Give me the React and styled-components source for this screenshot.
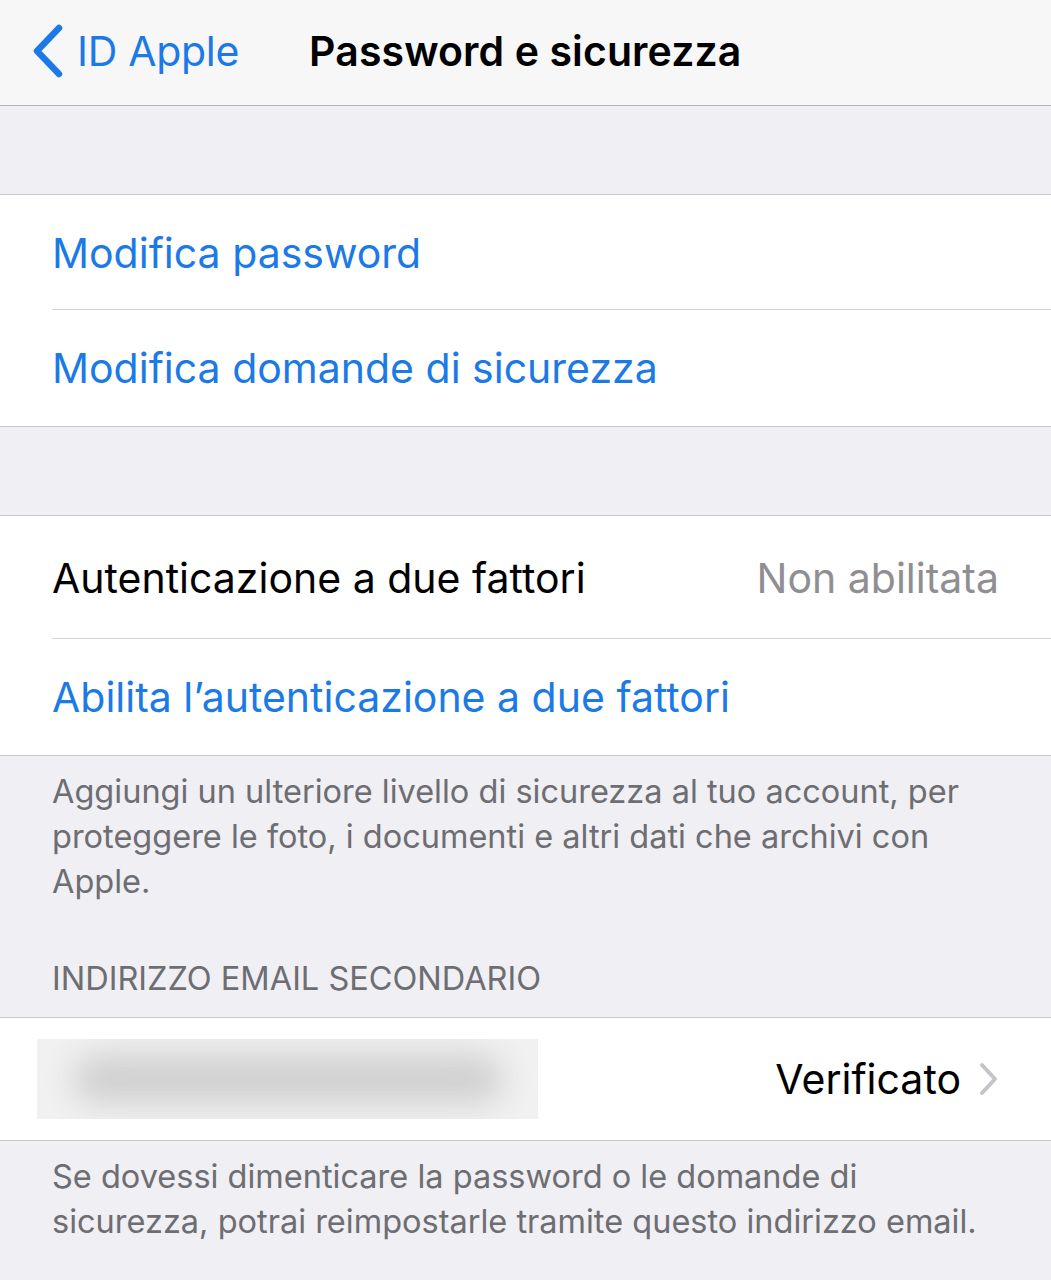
import React from "react";
import styled, { createGlobalStyle } from "styled-components";

const Global = createGlobalStyle`
  html, body { margin: 0; padding: 0; }
  body { font-family: "Inter", "Noto Sans", sans-serif; background: #efeff4; -webkit-font-smoothing: antialiased; }
`;

const Page = styled.div`
  width: 1051px;
  min-height: 1280px;
  background: #efeff4;
  overflow: hidden;
`;

const NavBar = styled.div`
  height: 106px;
  background: #f7f7f8;
  border-bottom: 1px solid #b4b4b8;
  display: flex;
  align-items: center;
  box-sizing: border-box;
  padding-left: 31px;
  padding-bottom: 4px;
`;

const Back = styled.div`
  display: flex;
  align-items: center;
  gap: 12px;
  color: #1c7ae6;
  font-size: 41px;
  letter-spacing: -0.3px;
`;

const Title = styled.div`
  margin-left: 70px;
  font-size: 41px;
  font-weight: 600;
  color: #000;
  letter-spacing: 0.1px;
`;

const Gap = styled.div`
  height: ${(p) => p.$h}px;
`;

const Group = styled.div`
  background: #fff;
  border-top: 1px solid #c8c7cc;
  border-bottom: 1px solid #c8c7cc;
`;

const Row = styled.div`
  height: ${(p) => p.$h}px;
  display: flex;
  align-items: center;
  padding-left: ${(p) => p.$pl ?? 52}px;
  padding-right: 52px;
  position: relative;
  box-sizing: border-box;
  &:not(:last-child)::after {
    content: "";
    position: absolute;
    left: 52px;
    right: 0;
    bottom: 0;
    height: 1px;
    background: #d4d3d8;
  }
`;

const Label = styled.div`
  flex: 1;
  font-size: 41px;
  letter-spacing: 0px;
  color: ${(p) => (p.$blue ? "#1c7ae6" : "#000")};
`;

const Detail = styled.div`
  font-size: 41px;
  letter-spacing: 0px;
  color: ${(p) => (p.$dark ? "#000" : "#8e8e93")};
`;

const Footer = styled.div`
  padding: ${(p) => p.$pt}px 52px 0;
  font-size: 32.5px;
  line-height: 45px;
  color: #6d6d72;
  white-space: nowrap;
`;

const Header = styled.div`
  padding: 0 52px 16px;
  font-size: 32.5px;
  line-height: 45px;
  color: #6d6d72;
  text-transform: uppercase;
`;

const Blur = styled.div`
  width: 501px;
  height: 80px;
  background: #f1f1f1;
  display: flex;
  align-items: center;
  justify-content: center;
  overflow: hidden;
  flex: none;
`;

const BlurInner = styled.div`
  width: 430px;
  height: 48px;
  border-radius: 30px;
  background: #cfcfcf;
  filter: blur(16px);
`;

const Spacer = styled.div`
  flex: 1;
`;

const Chevron = () => (
  <svg width="20" height="34" viewBox="0 0 20 34" style={{ marginLeft: 18 }}>
    <path d="M3 3 L16 17 L3 31" fill="none" stroke="#c4c4c9" strokeWidth="4" strokeLinecap="round" strokeLinejoin="round" />
  </svg>
);

const BackChevron = () => (
  <svg width="34" height="54" viewBox="0 0 34 54">
    <path d="M28 4 L6 27 L28 50" fill="none" stroke="#1c7ae6" strokeWidth="6.5" strokeLinecap="round" strokeLinejoin="round" />
  </svg>
);

export default function App() {
  return (
    <Page>
      <Global />
      <NavBar>
        <Back>
          <BackChevron />
          <span>ID Apple</span>
        </Back>
        <Title>Password e sicurezza</Title>
      </NavBar>
      <Gap $h={88} />
      <Group>
        <Row $h={115}><Label $blue>Modifica password</Label></Row>
        <Row $h={116}><Label $blue>Modifica domande di sicurezza</Label></Row>
      </Group>
      <Gap $h={88} />
      <Group>
        <Row $h={123}>
          <Label>Autenticazione a due fattori</Label>
          <Detail>Non abilitata</Detail>
        </Row>
        <Row $h={116}><Label $blue>Abilita l’autenticazione a due fattori</Label></Row>
      </Group>
      <Footer $pt={13}>
        Aggiungi un ulteriore livello di sicurezza al tuo account, per<br />
        proteggere le foto, i documenti e altri dati che archivi con<br />
        Apple.
      </Footer>
      <Gap $h={52} />
      <Header>Indirizzo email secondario</Header>
      <Group>
        <Row $h={122} $pl={37}>
          <Blur><BlurInner /></Blur>
          <Spacer />
          <Detail $dark>Verificato</Detail>
          <Chevron />
        </Row>
      </Group>
      <Footer $pt={13}>
        Se dovessi dimenticare la password o le domande di<br />
        sicurezza, potrai reimpostarle tramite questo indirizzo email.
      </Footer>
    </Page>
  );
}
